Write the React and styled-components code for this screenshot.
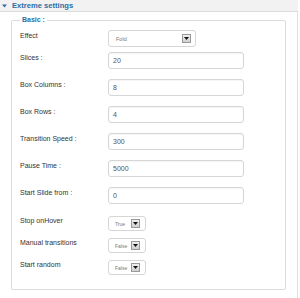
import React from 'react';
import styled, { createGlobalStyle } from 'styled-components'

const GlobalStyle = createGlobalStyle`
  html, body {
    margin: 0;
    padding: 0;
    background: #fff;
  }
  body {
    font-family: "Liberation Sans", Arial, sans-serif;
  }
`

const fields = [
    { label: 'Effect', type: 'select', value: 'Fold', size: 'wide', top: 6 },
    { label: 'Slices :', type: 'input', value: '20', top: 5 },
    { label: 'Box Columns :', type: 'input', value: '8', top: 10 },
    { label: 'Box Rows :', type: 'input', value: '4', top: 10 },
    { label: 'Transition Speed :', type: 'input', value: '300', top: 10 },
    { label: 'Pause Time :', type: 'input', value: '5000', top: 10 },
    { label: 'Start Slide from :', type: 'input', value: '0', top: 10 },
    { label: 'Stop onHover', type: 'select', value: 'True', size: 'small', top: 12 },
    { label: 'Manual transitions', type: 'select', value: 'False', size: 'small', top: 7 },
    { label: 'Start random', type: 'select', value: 'False', size: 'small', top: 7 },
]

const Arrow = () => (
    <ArrowBtn>
        <svg width="5" height="3" viewBox="0 0 5 3">
            <path d="M0 0 L5 0 L2.5 3 Z" fill="#111" />
        </svg>
    </ArrowBtn>
)

const Field = ({ field }) => {
    if (field.type === 'input') {
        return <TextBox>{field.value}</TextBox>
    }
    return (
        <SelectBox $size={field.size}>
            <SelectText $size={field.size}>{field.value}</SelectText>
            <Arrow />
        </SelectBox>
    )
}

const App = () => {
    return (
        <>
            <GlobalStyle />
            <Panel>
                <Header>
                    <svg width="5" height="4" viewBox="0 0 5 4">
                        <path d="M0 0.5 L5 0.5 L2.5 3.5 Z" fill="#2c6ea5" />
                    </svg>
                    <HeaderTitle>Extreme settings</HeaderTitle>
                </Header>
                <Body>
                    <Group>
                        <Legend>Basic :</Legend>
                        {fields.map((f) => (
                            <Row key={f.label} $top={f.top}>
                                <Label $small={f.size === 'small'}>{f.label}</Label>
                                <Field field={f} />
                            </Row>
                        ))}
                    </Group>
                </Body>
            </Panel>
        </>
    )
}

export default App

const Panel = styled.div`
    width: 298px;
    height: 298px;
    display: flex;
    flex-direction: column;
`

const Header = styled.div`
    box-sizing: border-box;
    height: 12px;
    background: #f2f2f2;
    border-bottom: 1px solid #dcdcdc;
    display: flex;
    align-items: center;
    padding-left: 2px;
    gap: 5px;
`

const HeaderTitle = styled.span`
    font-size: 7.6px;
    font-weight: bold;
    color: #2c6ea5;
    line-height: 11px;
`

const Body = styled.div`
    flex: 1;
    border-right: 1px solid #dedede;
    padding: 4px 0 0 11px;
`

const Group = styled.fieldset`
    box-sizing: border-box;
    width: 275px;
    height: 274px;
    margin: 0;
    padding: 0 0 0 8px;
    border: 1px solid #dcdcdc;
    border-radius: 2px;
    min-width: 0;
`

const Legend = styled.legend`
    font-size: 7px;
    font-weight: bold;
    color: #2c6ea5;
    line-height: 8px;
    padding: 0 2px;
`

const Row = styled.div`
    display: flex;
    align-items: flex-start;
    margin-top: ${props => props.$top}px;
`

const Label = styled.div`
    width: 88px;
    flex-shrink: 0;
    font-size: 7px;
    line-height: 8px;
    color: #333;
    padding-top: ${props => props.$small ? '1px' : '2px'};
`

const TextBox = styled.div`
    box-sizing: border-box;
    width: 136px;
    height: 17px;
    border: 1px solid #d6d6d6;
    border-radius: 3px;
    box-shadow: inset 0 1px 1px rgba(0, 0, 0, 0.04);
    padding-left: 4px;
    font-size: 7px;
    line-height: 15px;
    color: #555;
`

const SelectBox = styled.div`
    box-sizing: border-box;
    width: ${props => props.$size === 'wide' ? '88px' : '38px'};
    height: ${props => props.$size === 'wide' ? '17px' : '15px'};
    border: 1px solid #d6d6d6;
    border-radius: 3px;
    display: flex;
    align-items: center;
    justify-content: space-between;
    padding: ${props => props.$size === 'wide' ? '0 4px 0 7px' : '0 5px 0 6px'};
`

const SelectText = styled.span`
    font-size: ${props => props.$size === 'wide' ? '5.5px' : '5px'};
    color: #777;
`

const ArrowBtn = styled.div`
    box-sizing: border-box;
    width: 9px;
    height: 9px;
    border: 1px solid #9a9a9a;
    background: linear-gradient(#f0f0f0, #cfcfcf);
    display: flex;
    align-items: center;
    justify-content: center;
`
